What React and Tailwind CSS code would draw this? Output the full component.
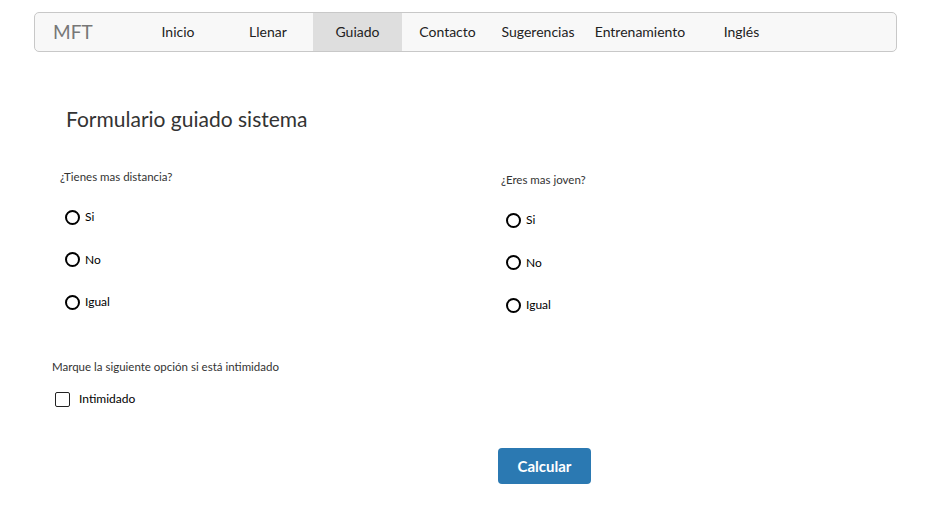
import React, { useState } from "react";

const navItems = [
  { label: "Inicio", w: "w-[90px]" },
  { label: "Llenar", w: "w-[90px]" },
  { label: "Guiado", w: "w-[89px]", active: true },
  { label: "Contacto", w: "w-[91px]" },
  { label: "Sugerencias", w: "w-[90px]" },
  { label: "Entrenamiento", w: "w-[114px]" },
  { label: "Inglés", w: "w-[89px]" },
];

const RadioGroup = ({ question, name, offset }) => {
  const [value, setValue] = useState(null);
  return (
    <div className={offset}>
      <p className="text-[11.5px] leading-[16px] text-[#333]">{question}</p>
      <div className="mt-[24px] ml-[5px] flex flex-col gap-[26.5px]">
        {["Si", "No", "Igual"].map((opt) => (
          <label key={opt} className="flex items-center gap-[5px] h-[16px] cursor-pointer">
            <span
              onClick={() => setValue(opt)}
              className="w-[15px] h-[15px] rounded-full border-2 border-black flex items-center justify-center"
            >
              {value === opt && <span className="w-[7px] h-[7px] rounded-full bg-black" />}
            </span>
            <span className="text-[12px] text-black">{opt}</span>
            <input type="radio" name={name} className="hidden" readOnly checked={value === opt} />
          </label>
        ))}
      </div>
    </div>
  );
};

export default function App() {
  const [intimidado, setIntimidado] = useState(false);

  return (
    <div className="min-h-screen bg-white" style={{ fontFamily: "Lato, 'Noto Sans', sans-serif" }}>
      {/* Navbar */}
      <div className="pt-3 pl-[34px]">
        <nav className="w-[863px] flex items-stretch h-[40px] border border-[#c8c8c8] rounded-[5px] bg-[#f8f8f8]">
          <div className="w-[98px] flex items-center pl-[18px] text-[19px] text-[#777]">MFT</div>
          {navItems.map((item) => (
            <div
              key={item.label}
              className={`${item.w} flex items-center justify-center pb-[2px] text-[14px] text-[#222] ${
                item.active ? "bg-[#dedede]" : ""
              }`}
            >
              {item.label}
            </div>
          ))}
        </nav>
      </div>

      {/* Form */}
      <div className="pl-[52px]">
        <h1 className="mt-[54px] ml-[14px] text-[21px] leading-[26px] text-[#333]">
          Formulario guiado sistema
        </h1>

        <div className="grid grid-cols-[449px_1fr] mt-[37px]">
          <RadioGroup question="¿Tienes mas distancia?" name="distancia" offset="pl-[8px]" />
          <RadioGroup question="¿Eres mas joven?" name="joven" offset="pt-[3px]" />
        </div>

        <p className="mt-[46px] text-[11.5px] leading-[16px] text-[#333]">
          Marque la siguiente opción si está intimidado
        </p>
        <label className="mt-[15px] ml-[3px] flex items-center gap-[9px] cursor-pointer">
          <span
            onClick={() => setIntimidado(!intimidado)}
            className="w-[15px] h-[15px] rounded-[2px] border border-[#222] bg-white flex items-center justify-center text-[11px] leading-none"
          >
            {intimidado ? "✓" : ""}
          </span>
          <span className="text-[12px] text-black">Intimidado</span>
        </label>

        <div className="mt-[40px] pl-[446px]">
          <button className="w-[93px] h-[36px] rounded-[4px] bg-[#2b79b2] text-white font-bold text-[15px]">
            Calcular
          </button>
        </div>
      </div>
    </div>
  );
}
